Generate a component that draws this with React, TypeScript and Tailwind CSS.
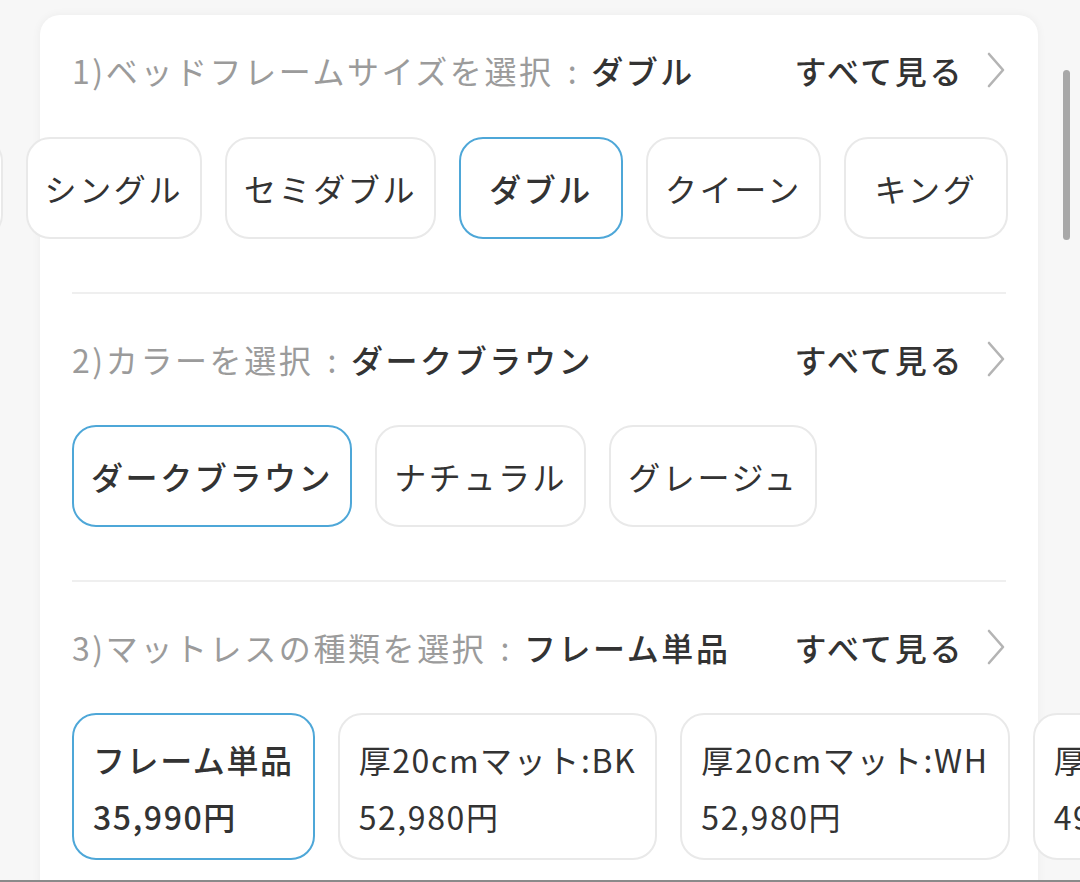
import React from "react";

type Opt = { label: string; price?: string; selected?: boolean };

function Chevron() {
  return (
    <svg width="20" height="36" viewBox="0 0 20 36" fill="none" className="ml-[22px]">
      <polyline points="3,2 17,18 3,34" stroke="#b4b4b4" strokeWidth="2.6" strokeLinecap="round" strokeLinejoin="round" fill="none" />
    </svg>
  );
}

function Header({ label, value }: { label: string; value: string }) {
  return (
    <div className="flex h-[44px] items-center justify-between">
      <div className="flex items-center whitespace-nowrap leading-[44px]">
        <span className="text-[#9b9b9b]">{label}</span>
        <span className="pl-[14px] pr-[12px] text-[#9b9b9b]">:</span>
        <span className="font-medium text-[#333333]">{value}</span>
      </div>
      <div className="flex items-center">
        <span className="font-medium text-[#333333] whitespace-nowrap">すべて見る</span>
        <Chevron />
      </div>
    </div>
  );
}

function Chip({ o }: { o: Opt }) {
  return (
    <div
      className={
        "flex h-[102px] min-w-[164px] shrink-0 items-center justify-center whitespace-nowrap rounded-[24px] border-2 bg-white px-[17px] text-[#333333] " +
        (o.selected ? "border-[#4ea7d8] font-medium" : "border-[#e9e9e9]")
      }
    >
      {o.label}
    </div>
  );
}

function PriceChip({ o }: { o: Opt }) {
  return (
    <div
      className={
        "flex h-[147px] shrink-0 flex-col whitespace-nowrap rounded-[24px] border-2 bg-white px-[19px] pt-[16px] pb-[12px] leading-[57px] text-[#333333] " +
        (o.selected ? "border-[#4ea7d8] font-medium" : "border-[#e9e9e9]")
      }
    >
      <span className="tracking-[1.6px]">{o.label}</span>
      <span className="tracking-[1.6px]">{o.price}</span>
    </div>
  );
}

export default function App() {
  const sizes: Opt[] = [
    { label: "セミシングル" },
    { label: "シングル" },
    { label: "セミダブル" },
    { label: "ダブル", selected: true },
    { label: "クイーン" },
    { label: "キング" },
  ];
  const colors: Opt[] = [
    { label: "ダークブラウン", selected: true },
    { label: "ナチュラル" },
    { label: "グレージュ" },
  ];
  const mats: Opt[] = [
    { label: "フレーム単品", price: "35,990円", selected: true },
    { label: "厚20cmマット:BK", price: "52,980円" },
    { label: "厚20cmマット:WH", price: "52,980円" },
    { label: "厚15cmマット:BK", price: "49,980円" },
  ];
  return (
    <div
      className="relative h-[882px] w-[1080px] overflow-hidden border-b-2 border-[#8a8a8a] bg-[#f7f7f7] text-[32px] tracking-[2.6px]"
      style={{ fontFamily: '"Noto Sans CJK JP", "Noto Sans", sans-serif' }}
    >
      <div className="ml-[40px] mt-[15px] w-[998px] rounded-[20px] bg-white px-[32px] pt-[33px] pb-[40px] shadow-[0_0_10px_rgba(0,0,0,0.05)]">
        <Header label="1)ベッドフレームサイズを選択" value="ダブル" />
        <div className="mt-[45px] -ml-[315px] flex gap-[23px]">
          {sizes.map((o) => (
            <Chip key={o.label} o={o} />
          ))}
        </div>
        <div className="mt-[53px] h-[2px] bg-[#efefef]" />
        <div className="mt-[43px]">
          <Header label="2)カラーを選択" value="ダークブラウン" />
        </div>
        <div className="mt-[44px] flex gap-[23px]">
          {colors.map((o) => (
            <Chip key={o.label} o={o} />
          ))}
        </div>
        <div className="mt-[53px] h-[2px] bg-[#efefef]" />
        <div className="mt-[43px]">
          <Header label="3)マットレスの種類を選択" value="フレーム単品" />
        </div>
        <div className="mt-[44px] flex gap-[23px]">
          {mats.map((o) => (
            <PriceChip key={o.label} o={o} />
          ))}
        </div>
      </div>
      <div className="absolute left-[1063px] top-[70px] h-[170px] w-[7px] rounded-full bg-[#a8a8a8]" />
    </div>
  );
}
